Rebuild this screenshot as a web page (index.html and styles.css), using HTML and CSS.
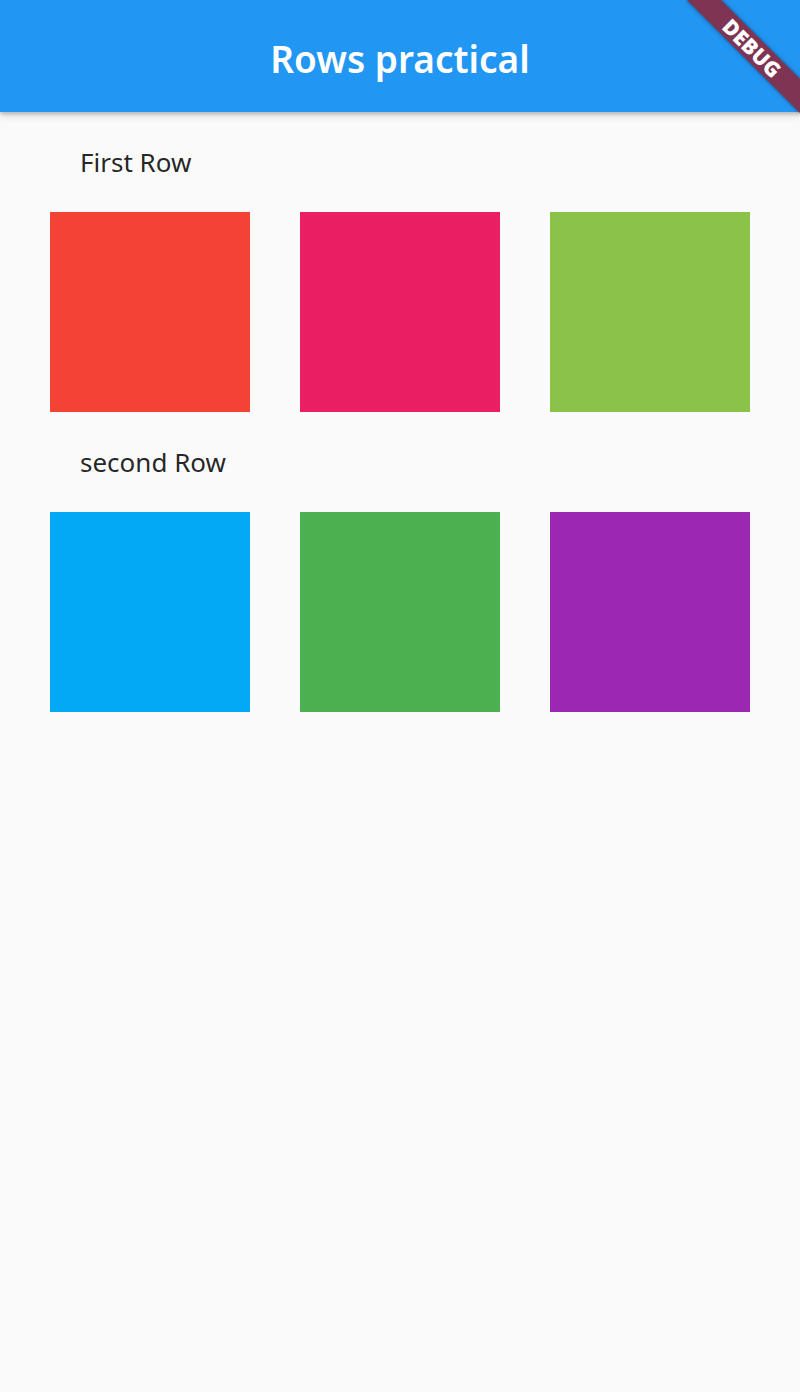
FILE: index.html
```html
<!DOCTYPE html>
<html>
<head>
<meta charset="utf-8">
<link rel="stylesheet" href="styles.css">
</head>
<body>
<header class="appbar">
  <h1 class="title">Rows practical</h1>
</header>
<main class="content">
  <section class="section">
    <div class="label">First Row</div>
    <div class="row">
      <div class="box red"></div>
      <div class="box pink"></div>
      <div class="box lightgreen"></div>
    </div>
  </section>
  <section class="section">
    <div class="label">second Row</div>
    <div class="row">
      <div class="box lightblue"></div>
      <div class="box green"></div>
      <div class="box purple"></div>
    </div>
  </section>
</main>
<div class="banner"><span>DEBUG</span></div>
</body>
</html>
```
FILE: styles.css
```css
html, body {
  margin: 0;
  padding: 0;
  width: 800px;
  height: 1392px;
  overflow: hidden;
}
body {
  background: #fafafa;
  font-family: "Noto Sans", "Open Sans", sans-serif;
  position: relative;
}
.appbar {
  height: 112px;
  background: #2196f3;
  display: flex;
  align-items: center;
  justify-content: center;
  box-shadow: 0 2px 4px rgba(0,0,0,0.2), 0 4px 8px rgba(0,0,0,0.12);
  position: relative;
  z-index: 1;
}
.title {
  margin: 0;
  padding-top: 4px;
  color: #fff;
  font-size: 37px;
  font-weight: 600;
  line-height: 1;
}
.content {
  display: flex;
  flex-direction: column;
}
.section {
  display: flex;
  flex-direction: column;
}
.label {
  height: 100px;
  display: flex;
  align-items: center;
  padding-left: 80px;
  font-size: 26px;
  color: rgba(0,0,0,0.87);
}
.row {
  display: flex;
  justify-content: space-evenly;
}
.box {
  width: 200px;
  height: 200px;
}
.red { background: #f44336; }
.pink { background: #e91e63; }
.lightgreen { background: #8bc34a; }
.lightblue { background: #03a9f4; }
.green { background: #4caf50; }
.purple { background: #9c27b0; }
.banner {
  position: absolute;
  left: 672px;
  top: 36px;
  width: 160px;
  height: 24px;
  transform: rotate(45deg);
  background: #7e3452;
  box-shadow: 0 0 4px rgba(0,0,0,0.5);
  display: flex;
  align-items: center;
  justify-content: center;
  z-index: 2;
}
.banner span {
  color: #fff;
  font-family: "Noto Sans", sans-serif;
  font-weight: 900;
  font-size: 21px;
  line-height: 1;
}
```
